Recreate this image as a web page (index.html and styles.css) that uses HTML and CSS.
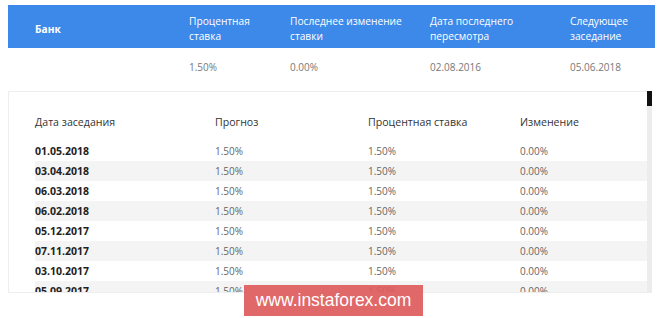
FILE: index.html
```html
<!DOCTYPE html>
<html lang="ru">
<head>
<meta charset="utf-8">
<title>Банк</title>
<link rel="stylesheet" href="styles.css">
</head>
<body>
<div class="bank">
  <div class="bank-head">
    <div class="cell name">Банк</div>
    <div class="cell">Процентная<br>ставка</div>
    <div class="cell">Последнее изменение<br>ставки</div>
    <div class="cell">Дата последнего<br>пересмотра</div>
    <div class="cell">Следующее<br>заседание</div>
  </div>
  <div class="bank-row">
    <div class="cell"></div>
    <div class="cell">1.50%</div>
    <div class="cell">0.00%</div>
    <div class="cell">02.08.2016</div>
    <div class="cell">05.06.2018</div>
  </div>
</div>
<div class="panel">
  <div class="panel-body">
    <table class="hist">
      <thead>
        <tr><th class="c1">Дата заседания</th><th class="c2">Прогноз</th><th class="c3">Процентная ставка</th><th>Изменение</th></tr>
      </thead>
      <tbody>
        <tr><td class="date">01.05.2018</td><td>1.50%</td><td>1.50%</td><td>0.00%</td></tr>
        <tr><td class="date">03.04.2018</td><td>1.50%</td><td>1.50%</td><td>0.00%</td></tr>
        <tr><td class="date">06.03.2018</td><td>1.50%</td><td>1.50%</td><td>0.00%</td></tr>
        <tr><td class="date">06.02.2018</td><td>1.50%</td><td>1.50%</td><td>0.00%</td></tr>
        <tr><td class="date">05.12.2017</td><td>1.50%</td><td>1.50%</td><td>0.00%</td></tr>
        <tr><td class="date">07.11.2017</td><td>1.50%</td><td>1.50%</td><td>0.00%</td></tr>
        <tr><td class="date">03.10.2017</td><td>1.50%</td><td>1.50%</td><td>0.00%</td></tr>
        <tr><td class="date">05.09.2017</td><td>1.50%</td><td>1.50%</td><td>0.00%</td></tr>
        <tr><td class="date">01.08.2017</td><td>1.50%</td><td>1.50%</td><td>0.00%</td></tr>
      </tbody>
    </table>
  </div>
  <div class="track"><div class="thumb"></div></div>
</div>
<div class="watermark">www.instaforex.com</div>
</body>
</html>
```
FILE: styles.css
```css
html, body {
  margin: 0;
  background: #fff;
}
body {
  padding: 5px 0 0 8px;
  font-family: "Open Sans", "Liberation Sans", sans-serif;
  position: relative;
  height: 313px;
  overflow: hidden;
}
.bank {
  width: 647px;
}
.bank-head, .bank-row {
  display: grid;
  grid-template-columns: 154px 101px 140px 140px 1fr;
  padding-left: 27px;
  align-items: center;
}
.bank-head {
  background: #3d89e9;
  color: #fff;
  font-size: 10.2px;
  line-height: 15px;
  padding-top: 9px;
  padding-bottom: 4px;
}
.bank-head .name {
  font-weight: 700;
}
.bank-row {
  color: #777;
  font-size: 10px;
  line-height: 14px;
  padding-top: 12px;
  padding-bottom: 12px;
}
.bank-row .cell {
  min-height: 14px;
}
.panel {
  display: flex;
  width: 644px;
  margin-top: 5px;
}
.panel-body {
  flex: 1;
  height: 189px;
  border: 1px solid #eee;
  border-right: none;
  overflow: hidden;
  padding: 11px 0 0 26px;
  box-sizing: content-box;
}
.track {
  width: 5px;
  background: #ececec;
}
.thumb {
  height: 15px;
  background: #111;
}
.hist {
  width: 100%;
  border-collapse: collapse;
  font-size: 10px;
}
.hist th {
  text-align: left;
  font-weight: 400;
  font-size: 10.6px;
  color: #333;
  height: 38px;
  padding: 0;
  vertical-align: middle;
}
.hist .c1 { width: 180px; }
.hist .c2 { width: 153px; }
.hist .c3 { width: 152px; }
.hist td {
  height: 20px;
  padding: 0;
  color: #666;
  vertical-align: middle;
}
.hist td.date {
  font-weight: 700;
  color: #222;
  font-size: 10.5px;
}
.hist tbody tr:nth-child(even) td {
  background: #f4f4f4;
}
.watermark {
  position: absolute;
  left: 244px;
  top: 285px;
  width: 179px;
  height: 31px;
  background: rgba(222, 92, 92, 0.93);
  color: #fff;
  font-family: "Liberation Sans", Arial, sans-serif;
  font-size: 17.5px;
  line-height: 31px;
  text-align: center;
}
```
